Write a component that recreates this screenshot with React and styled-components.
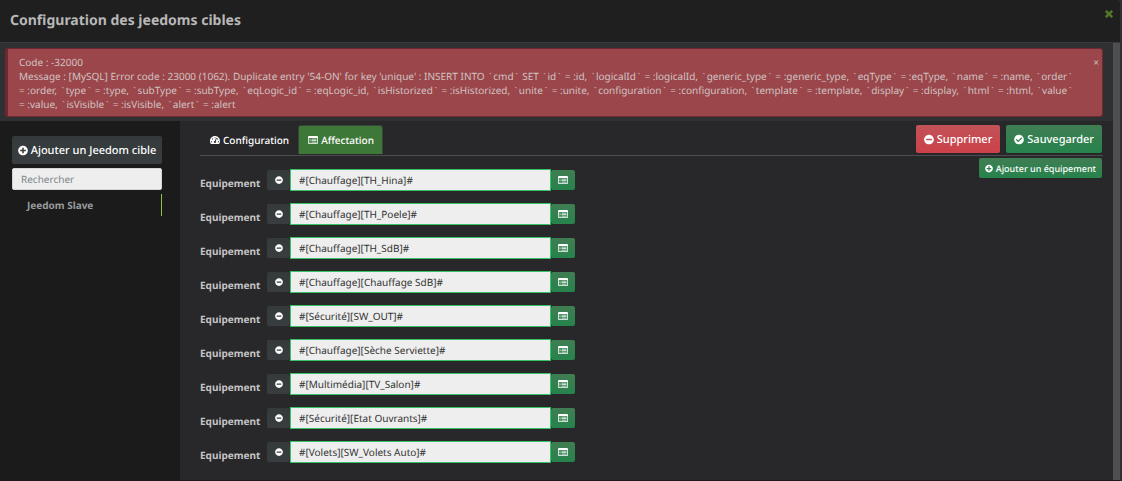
import React, { useState } from "react";
import styled, { createGlobalStyle, css } from "styled-components";
import {
  FaCheckCircle,
  FaMinusCircle,
  FaPlusCircle,
  FaTachometerAlt,
  FaTimes,
} from "react-icons/fa";

const equipements = [
  "#[Chauffage][TH_Hina]#",
  "#[Chauffage][TH_Poele]#",
  "#[Chauffage][TH_SdB]#",
  "#[Chauffage][Chauffage SdB]#",
  "#[Sécurité][SW_OUT]#",
  "#[Chauffage][Sèche Serviette]#",
  "#[Multimédia][TV_Salon]#",
  "#[Sécurité][Etat Ouvrants]#",
  "#[Volets][SW_Volets Auto]#",
];

const errorMessage =
  "Message : [MySQL] Error code : 23000 (1062). Duplicate entry '54-ON' for key 'unique' : " +
  "INSERT INTO `cmd` SET `id` = :id, `logicalId` = :logicalId, `generic_type` = :generic_type, " +
  "`eqType` = :eqType, `name` = :name, `order` = :order, `type` = :type, `subType` = :subType, " +
  "`eqLogic_id` = :eqLogic_id, `isHistorized` = :isHistorized, `unite` = :unite, " +
  "`configuration` = :configuration, `template` = :template, `display` = :display, " +
  "`html` = :html, `value` = :value, `isVisible` = :isVisible, `alert` = :alert";

function ListAltIcon() {
  return (
    <svg width="10" height="8" viewBox="0 0 20 16" fill="currentColor" aria-hidden="true">
      <path
        fillRule="evenodd"
        d="M2 0h16a2 2 0 0 1 2 2v12a2 2 0 0 1-2 2H2a2 2 0 0 1-2-2V2a2 2 0 0 1 2-2zM1.500 4v10l.5.5h16l.5-.5V4z"
      />
      <path d="M3 5.500h2v1.500H3zM7 5.500h10v1.500H7zM3 8.500h2v1.500H3zM7 8.500h10v1.500H7zM3 11.500h2v1.500H3zM7 11.500h10v1.500H7z" />
    </svg>
  );
}

// the backticks of Noto Sans are too narrow to read around column names
function SqlText({ children }) {
  return children.split(/([` ])/).map((part, index) => {
    return part === "`" ? <StTick key={index}>`</StTick> : part;
  });
}

function App() {
  const [rows, setRows] = useState(equipements);

  const onChangeRow = (index, value) => {
    setRows(rows.map((row, i) => (i === index ? value : row)));
  };

  return (
    <StDialog>
      <GlobalStyle />
      <StHeader>
        <StTitle>Configuration des jeedoms cibles</StTitle>
        <StClose type="button" aria-label="Fermer">
          <FaTimes stroke="currentColor" strokeWidth="50" />
        </StClose>
      </StHeader>
      <StContent>
        <StAlertArea>
          <StAlert role="alert">
            <p>
              Code : -32000
              <br />
              <SqlText>{errorMessage}</SqlText>
            </p>
            <StAlertClose type="button" aria-label="Fermer l'alerte">
              ×
            </StAlertClose>
          </StAlert>
        </StAlertArea>
        <StColumns>
          <StSidebar>
            <StButton type="button" $size="large">
              <FaPlusCircle />
              Ajouter un Jeedom cible
            </StButton>
            <StSearch type="text" placeholder="Rechercher" aria-label="Rechercher" />
            <StSlaveLink href="#slave">Jeedom Slave</StSlaveLink>
          </StSidebar>
          <StMain>
            <StToolbar>
              <StTabs>
                <StTab href="#configuration">
                  <FaTachometerAlt />
                  Configuration
                </StTab>
                <StTab href="#affectation" $active>
                  <ListAltIcon />
                  Affectation
                </StTab>
              </StTabs>
              <StActions>
                <StButton type="button" $size="large" $color="red">
                  <FaMinusCircle />
                  Supprimer
                </StButton>
                <StButton type="button" $size="large" $color="green">
                  <FaCheckCircle />
                  Sauvegarder
                </StButton>
              </StActions>
            </StToolbar>
            <StPanel>
              <StRows>
                {rows.map((row, index) => {
                  return (
                    <StRow key={index}>
                      <StLabel htmlFor={`equipement-${index}`}>Equipement</StLabel>
                      <StGroup>
                        <StAddon type="button" aria-label="Supprimer l'équipement">
                          <FaMinusCircle />
                        </StAddon>
                        <StInput
                          id={`equipement-${index}`}
                          type="text"
                          value={row}
                          onChange={(e) => onChangeRow(index, e.target.value)}
                        />
                        <StAddon type="button" $color="green" aria-label="Choisir un équipement">
                          <ListAltIcon />
                        </StAddon>
                      </StGroup>
                    </StRow>
                  );
                })}
              </StRows>
              <StButton type="button" $color="green">
                <FaPlusCircle />
                Ajouter un équipement
              </StButton>
            </StPanel>
          </StMain>
        </StColumns>
      </StContent>
    </StDialog>
  );
}

export default App;

const GlobalStyle = createGlobalStyle`
  * {
    box-sizing: border-box;
  }

  body {
    margin: 0;
    background-color: #303032;
    color: #c4c4c4;
    font-family: "Noto Sans", sans-serif;
    font-size: 10px;
    text-rendering: geometricPrecision;
  }

  button,
  input {
    font-family: inherit;
    margin: 0;
    text-rendering: inherit;
  }

  svg {
    flex: none;
  }
`;

const colors = {
  grey: css`
    background-image: linear-gradient(#343a3b, #393d3f);
  `,
  green: css`
    background-image: linear-gradient(#407d53, #26834c);
  `,
  red: css`
    background-image: linear-gradient(#c05358, #cd4049);
  `,
};

const StDialog = styled.div`
  display: flex;
  flex-direction: column;
  min-height: 100vh;
  margin-right: 2px;
  border-bottom: 1px solid #1c171c;
  border-top-right-radius: 4px;
  background-color: #28282a;
`;

const StHeader = styled.header`
  display: flex;
  justify-content: space-between;
  align-items: flex-start;
  height: 43px;
  padding: 9px 6px 0 10px;
  background-color: #1f1f1f;
  border-bottom: 1px solid #38393a;
  border-top-right-radius: 4px;
`;

const StTitle = styled.h1`
  margin: 0;
  font-size: 14px;
  line-height: 24px;
  font-weight: 700;
  color: #b8b8b8;
`;

const StClose = styled.button`
  display: flex;
  padding: 0;
  border: 0;
  background: none;
  color: #577a2b;
  font-size: 10px;
  cursor: pointer;
`;

const StContent = styled.div`
  flex: 1;
  display: flex;
  flex-direction: column;
  border-right: 7px solid #4f4f51;
`;

const StAlertArea = styled.div`
  padding: 5px 10px 4px 5px;
  background-color: #2e3032;
`;

const StAlert = styled.div`
  display: flex;
  align-items: flex-start;
  padding: 6px 3px 5px 11px;
  border: 1px solid #6f2831;
  border-left-width: 3px;
  border-radius: 3px;
  background-color: #9b464a;

  p {
    flex: 1;
    margin: 0;
    padding-right: 16px;
    font-size: 10px;
    line-height: 14px;
    color: #d0c3c3;
  }
`;

const StTick = styled.span`
  font-family: "Liberation Mono", monospace;
  line-height: 0;
`;

const StAlertClose = styled.button`
  padding: 0;
  border: 0;
  background: none;
  color: #d0c3c3;
  font-size: 10px;
  line-height: 14px;
  cursor: pointer;
`;

const StColumns = styled.div`
  flex: 1;
  display: flex;
`;

const StSidebar = styled.nav`
  display: flex;
  flex-direction: column;
  gap: 4px;
  width: 180px;
  padding: 15px 18px 0 12px;
  background-color: #1b1b1b;
`;

const StMain = styled.main`
  flex: 1;
  padding: 4px 10px 0 20px;
`;

const StButton = styled.button`
  display: flex;
  justify-content: center;
  align-items: center;
  gap: 3px;
  height: ${({ $size }) => ($size === "large" ? 28 : 20)}px;
  padding: 0 ${({ $size }) => ($size === "large" ? 8 : 6)}px;
  border: 0;
  border-radius: 2px;
  ${({ $color = "grey" }) => colors[$color]}
  color: #fff;
  font-size: ${({ $size }) => ($size === "large" ? 11 : 9)}px;
  font-weight: 500;
  white-space: nowrap;
  cursor: pointer;

  svg {
    width: ${({ $size }) => ($size === "large" ? 10 : 8)}px;
  }
`;

const StSearch = styled.input`
  width: 100%;
  height: 22px;
  padding: 0 8px;
  border: 1px solid #d5d5d5;
  border-radius: 2px;
  background-color: #eee;
  font-size: 10px;

  &::placeholder {
    color: #7d868a;
    opacity: 1;
  }
`;

const StSlaveLink = styled.a`
  padding-left: 15px;
  border-right: 1px solid #8fc050;
  color: #9a9a9e;
  font-size: 10px;
  line-height: 22px;
  font-weight: 700;
  text-decoration: none;
`;

const StToolbar = styled.div`
  display: flex;
  justify-content: space-between;
  border-bottom: 1px solid #4d4d50;
`;

const StTabs = styled.div`
  display: flex;
`;

const StTab = styled.a`
  display: flex;
  align-items: center;
  gap: 3px;
  height: 29px;
  padding: 0 8px 0 9px;
  border: 1px solid ${({ $active }) => ($active ? "#36463b" : "transparent")};
  border-bottom: 0;
  border-radius: 3px 3px 0 0;
  background-color: ${({ $active }) => ($active ? "#3d7838" : "transparent")};
  color: #fff;
  font-size: 10px;
  font-weight: 500;
  text-decoration: none;
`;

const StActions = styled.div`
  display: flex;
  gap: 6px;
  padding: 0 1px 2px 0;
`;

const StPanel = styled.div`
  display: flex;
  justify-content: space-between;
  align-items: flex-start;
  padding: 2px 1px 0 0;
`;

const StRows = styled.div`
  display: flex;
  flex-direction: column;
  gap: 12px;
  padding: 11px 0;
`;

const StRow = styled.div`
  display: flex;
`;

const StLabel = styled.label`
  width: 67px;
  padding-top: 7px;
  font-size: 10px;
  line-height: 14px;
  font-weight: 700;
`;

const StGroup = styled.div`
  display: flex;
  align-items: center;
  width: 308px;
`;

const StAddon = styled.button`
  display: flex;
  justify-content: center;
  align-items: center;
  width: ${({ $color }) => ($color ? 24 : 23)}px;
  height: 20px;
  padding: 0;
  border: 0;
  border-radius: 2px;
  ${({ $color = "grey" }) => colors[$color]}
  color: #fff;
  font-size: 8px;
  cursor: pointer;
`;

const StInput = styled.input`
  flex: 1;
  min-width: 0;
  height: 22px;
  padding: 0 8px;
  border: 1px solid #37c266;
  border-radius: 0;
  background-color: #eee;
  color: #333;
  font-size: 10px;
`;
